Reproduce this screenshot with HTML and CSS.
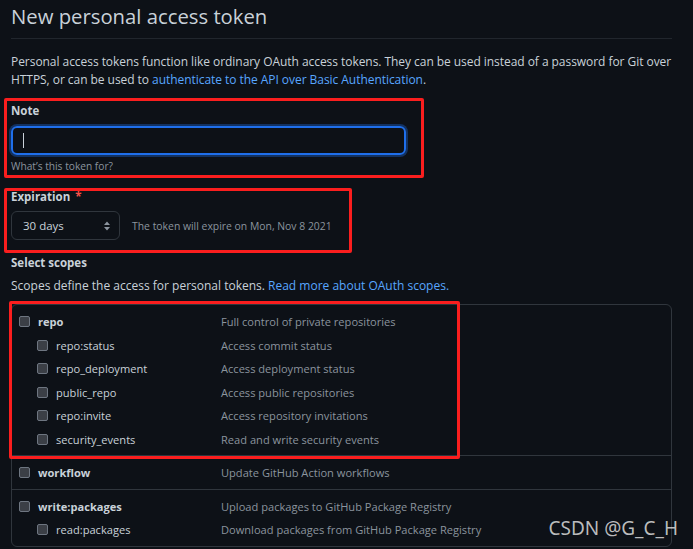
FILE: index.html
```html
<!DOCTYPE html>
<html lang="en">
<head>
<meta charset="utf-8">
<title>New personal access token</title>
<link rel="stylesheet" href="styles.css">
</head>
<body>
<div class="page">
  <h1 class="title">New personal access token</h1>
  <p class="intro">Personal access tokens function like ordinary OAuth access tokens. They can be used instead of a password for Git over HTTPS, or can be used to <a href="#">authenticate to the API over Basic Authentication</a>.</p>

  <div class="field">
    <label class="label">Note</label>
    <div class="input"><span class="caret"></span></div>
    <p class="hint">What’s this token for?</p>
  </div>

  <div class="field field-exp">
    <label class="label">Expiration <span class="req">*</span></label>
    <div class="exp-row">
      <div class="select">
        <span>30 days</span>
        <svg class="updown" width="8" height="12" viewBox="0 0 8 12"><path d="M4 1.5 L7 5 H1 Z M4 10.5 L7 7 H1 Z" fill="#8b949e"/></svg>
      </div>
      <span class="hint exp-hint">The token will expire on Mon, Nov 8 2021</span>
    </div>
  </div>

  <h3 class="label scopes-title">Select scopes</h3>
  <p class="scopes-desc">Scopes define the access for personal tokens. <a href="#">Read more about OAuth scopes.</a></p>

  <div class="scopes">
    <div class="group">
      <div class="row top"><span class="name"><span class="cb"></span><b>repo</b></span><span class="desc">Full control of private repositories</span></div>
      <div class="row sub"><span class="name"><span class="cb"></span>repo:status</span><span class="desc">Access commit status</span></div>
      <div class="row sub"><span class="name"><span class="cb"></span>repo_deployment</span><span class="desc">Access deployment status</span></div>
      <div class="row sub"><span class="name"><span class="cb"></span>public_repo</span><span class="desc">Access public repositories</span></div>
      <div class="row sub"><span class="name"><span class="cb"></span>repo:invite</span><span class="desc">Access repository invitations</span></div>
      <div class="row sub"><span class="name"><span class="cb"></span>security_events</span><span class="desc">Read and write security events</span></div>
    </div>
    <div class="group">
      <div class="row top"><span class="name"><span class="cb"></span><b>workflow</b></span><span class="desc">Update GitHub Action workflows</span></div>
    </div>
    <div class="group">
      <div class="row top"><span class="name"><span class="cb"></span><b>write:packages</b></span><span class="desc">Upload packages to GitHub Package Registry</span></div>
      <div class="row sub"><span class="name"><span class="cb"></span>read:packages</span><span class="desc">Download packages from GitHub Package Registry</span></div>
    </div>
  </div>

  <div class="mark mark-note"></div>
  <div class="mark mark-exp"></div>
  <div class="mark mark-scope"></div>
  <div class="watermark">CSDN @G_C_H</div>
</div>
</body>
</html>
```

FILE: styles.css
```css
html, body {
  margin: 0;
  padding: 0;
  background: #0d1117;
  height: 549px;
  overflow: hidden;
}

.page {
  position: relative;
  width: 661px;
  padding-left: 11px;
  font-family: "Open Sans", "Noto Sans", sans-serif;
  font-size: 12px;
  color: #c9d1d9;
}

a {
  color: #58a6ff;
  text-decoration: none;
}

.title {
  margin: 0;
  font-size: 20.3px;
  font-weight: 400;
  line-height: 32px;
  padding-bottom: 6px;
  border-bottom: 1px solid #21262d;
  color: #c9d1d9;
}

.intro {
  margin: 14px 0 0;
  line-height: 18px;
  letter-spacing: -0.05px;
}

.field {
  margin-top: 13px;
}

.field-exp {
  margin-top: 15px;
}

.label {
  display: block;
  margin: 0;
  font-size: 11.5px;
  font-weight: 700;
  line-height: 18px;
  color: #c9d1d9;
}

.req {
  color: #f85149;
  margin-left: 2px;
}

.input {
  margin-top: 6px;
  box-sizing: border-box;
  width: 395px;
  height: 29px;
  border: 2px solid #1f6feb;
  border-radius: 6px;
  box-shadow: 0 0 0 2px rgba(31, 111, 235, 0.35);
  display: flex;
  align-items: center;
  padding-left: 10px;
}

.caret {
  width: 1px;
  height: 15px;
  background: #c9d1d9;
}

.hint {
  margin: 4px 0 0;
  font-size: 10.2px;
  line-height: 14px;
  color: #8b949e;
}

.exp-row {
  margin-top: 5px;
  display: flex;
  align-items: center;
  gap: 12px;
}

.exp-hint {
  margin: 0;
  font-size: 10.4px;
}

.select {
  box-sizing: border-box;
  width: 109px;
  height: 29px;
  border: 1px solid #30363d;
  border-radius: 6px;
  display: flex;
  align-items: center;
  justify-content: space-between;
  padding: 0 8px 0 11px;
  font-size: 11.5px;
  color: #c9d1d9;
}

.scopes-title {
  margin-top: 14px;
}

.scopes-desc {
  margin: 5px 0 0;
  line-height: 18px;
}

.scopes {
  margin-top: 9px;
  border: 1px solid #30363d;
  border-radius: 6px;
  width: 661px;
  box-sizing: border-box;
  font-size: 11.1px;
}

.group {
  padding: 5px 0 4px;
  border-top: 1px solid #30363d;
}

.group:first-child {
  border-top: 0;
}

.row {
  display: flex;
  align-items: center;
  height: 23.5px;
  padding-left: 7px;
}

.name {
  width: 202px;
  flex: none;
  display: flex;
  align-items: center;
  gap: 8px;
  color: #c9d1d9;
}

.sub .name {
  box-sizing: border-box;
  padding-left: 18px;
}

.name b {
  font-weight: 700;
}

.desc {
  color: #8b949e;
}

.cb {
  box-sizing: border-box;
  width: 11px;
  height: 11px;
  border: 1px solid #6e7681;
  background: #3b3f46;
  border-radius: 2px;
  flex: none;
}

.mark {
  position: absolute;
  box-sizing: border-box;
  border: 3px solid #fa1e1e;
  border-radius: 2px;
}

.mark-note {
  left: 4px;
  top: 98px;
  width: 420px;
  height: 80px;
}

.mark-exp {
  left: 4px;
  top: 188px;
  width: 348px;
  height: 65px;
}

.mark-scope {
  left: 9px;
  top: 301px;
  width: 451px;
  height: 158px;
}

.watermark {
  position: absolute;
  right: -6px;
  top: 514px;
  font-family: "Noto Sans", "Open Sans", sans-serif;
  font-size: 19px;
  line-height: 28px;
  color: rgba(220, 220, 220, 0.85);
}
```
